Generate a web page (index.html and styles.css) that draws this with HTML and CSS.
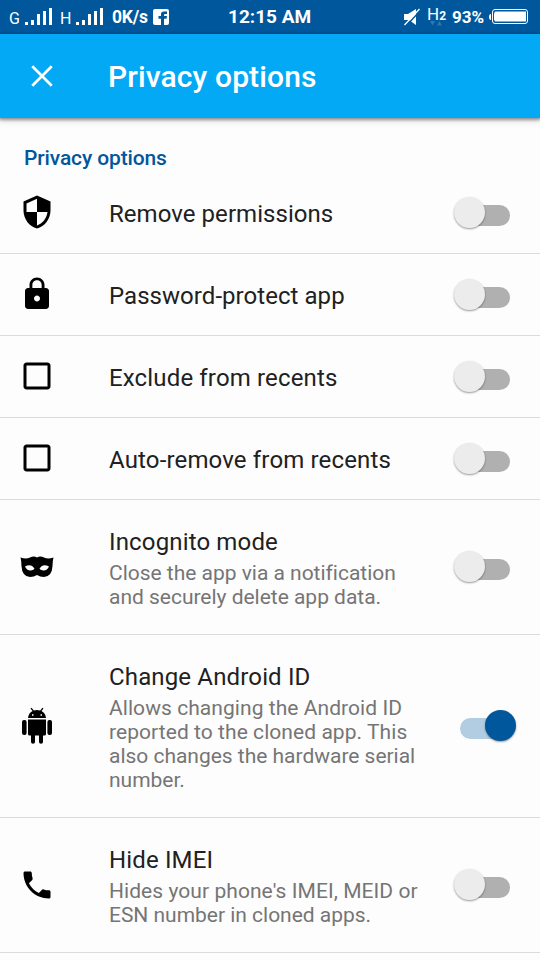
FILE: index.html
```html
<!DOCTYPE html>
<html lang="en">
<head>
<meta charset="utf-8">
<title>Privacy options</title>
<link rel="stylesheet" href="styles.css">
</head>
<body>
<div class="status">
  <div class="status-left">
    <span class="net net-g">G</span>
    <svg class="bars" width="28" height="18" viewBox="0 0 28 18" fill="#fff"><path d="M0 14h3v3H0zM6 12h3v5H6zM12 6h3v11h-3zM18 3h3v14h-3zM24 0h3v17h-3z"/></svg>
    <span class="net net-h">H</span>
    <svg class="bars" width="28" height="18" viewBox="0 0 28 18" fill="#fff"><path d="M0 14h3v3H0zM6 12h3v5H6zM12 6h3v11h-3zM18 3h3v14h-3zM24 0h3v17h-3z"/></svg>
    <span class="speed">0K/s</span>
    <svg class="fb" width="16" height="16" viewBox="0 0 16 16"><rect width="16" height="16" rx="2" fill="#fff"/><path d="M8 16V9.700H5.500V7H8V5.200Q8 2.500 11 2.500H14V5H12Q11 5 11 6V7H14L13.500 9.700H11V16z" fill="#01579b"/></svg>
  </div>
  <div class="clock">12:15 AM</div>
  <div class="status-right">
    <svg class="mute" width="17" height="17" viewBox="0 0 17 17"><path d="M0 5h4l8-5v16l-7-5H0z" fill="#fff"/><path d="M1.500 17.500 16 2" stroke="#01579b" stroke-width="1.500"/><path d="M.5 16 15.500 0" stroke="#fff" stroke-width="1.300"/></svg>
    <span class="mobile">H<span class="two">2</span><svg class="updown" width="12" height="5" viewBox="0 0 12 5" fill="#2f78b0"><path d="M0 0h5L2.500 4.500zM7 4.500h5L9.500 0z"/></svg></span>
    <span class="pct">93%</span>
    <svg class="battery" width="39" height="16" viewBox="0 0 39 16"><path d="M2 5Q0 5 0 8T2 11z" fill="#fff"/><rect x="3.500" y=".5" width="35" height="14" rx="2.500" fill="none" stroke="#fff"/><path d="M6 2.500h31v10H6l-1-2v-6z" fill="#fff"/></svg>
  </div>
</div>
<header class="appbar">
  <svg class="close" width="36" height="36" viewBox="0 0 24 24"><path d="M5.500 5.500l13 13M18.500 5.500l-13 13" stroke="#fff" stroke-width="1.800"/></svg>
  <h1>Privacy options</h1>
</header>
<main>
  <h2>Privacy options</h2>
  <div class="row">
    <svg class="icon" viewBox="0 0 24 24"><path d="M12 1 3 5v6c0 5.550 3.840 10.740 9 12 5.160-1.260 9-6.450 9-12V5l-9-4zm0 10.990h7c-.53 4.120-3.280 7.790-7 8.940V12H5V6.300l7-3.110v8.800z"/></svg>
    <div class="text"><div class="title">Remove permissions</div></div>
    <div class="switch"></div>
  </div>
  <div class="row">
    <svg class="icon" viewBox="0 0 24 24"><path d="M18 8h-1V6c0-2.760-2.240-5-5-5S7 3.240 7 6v2H6c-1.100 0-2 .9-2 2v10c0 1.100.9 2 2 2h12c1.100 0 2-.9 2-2V10c0-1.100-.9-2-2-2zm-6 9c-1.100 0-2-.9-2-2s.9-2 2-2 2 .9 2 2-.9 2-2 2zm3.100-9H8.900V6c0-1.710 1.390-3.100 3.100-3.100 1.710 0 3.100 1.390 3.100 3.100v2z"/></svg>
    <div class="text"><div class="title">Password-protect app</div></div>
    <div class="switch"></div>
  </div>
  <div class="row">
    <svg class="icon" viewBox="0 0 24 24"><path d="M19 5v14H5V5h14m0-2H5c-1.100 0-2 .9-2 2v14c0 1.100.9 2 2 2h14c1.100 0 2-.9 2-2V5c0-1.100-.9-2-2-2z"/></svg>
    <div class="text"><div class="title wide">Exclude from recents</div></div>
    <div class="switch"></div>
  </div>
  <div class="row">
    <svg class="icon" viewBox="0 0 24 24"><path d="M19 5v14H5V5h14m0-2H5c-1.100 0-2 .9-2 2v14c0 1.100.9 2 2 2h14c1.100 0 2-.9 2-2V5c0-1.100-.9-2-2-2z"/></svg>
    <div class="text"><div class="title wide">Auto-remove from recents</div></div>
    <div class="switch"></div>
  </div>
  <div class="row">
    <svg class="icon" viewBox="0 0 36 36"><path fill-rule="evenodd" d="M1.500 8.500Q7 10.500 11 8.500Q15 6.500 18 8.500Q21 6.500 25 8.500Q29 10.500 34.500 8.500Q33.500 12 33.500 17Q33 27.500 25 28Q21 28 18 26Q15 28 11 28Q3 27.500 2.500 17Q2.500 12 1.500 8.500zM6 17.500Q8 22 12 21.500Q15 21 15.500 19.500Q12 14 6 17.500zM30 17.500Q28 22 24 21.500Q21 21 20.500 19.500Q24 14 30 17.500z"/></svg>
    <div class="text"><div class="title wide">Incognito mode</div><div class="sub">Close the app via a notification<br>and securely delete app data.</div></div>
    <div class="switch"></div>
  </div>
  <div class="row">
    <svg class="icon" viewBox="0 0 36 36"><path fill-rule="evenodd" d="M9 10Q9.500 5 13.500 3L11.500.5l1-.7 2.300 2.700Q18 1.500 21.200 2.500L23.500-.2l1 .7L22.500 3Q26.500 5 27 10zM13 6.200v1.500h1.500V6.200zM21.500 6.200v1.500H23V6.200z"/><path d="M9 11.500h18V26q0 1.500-1.500 1.500H24V34q0 1.800-2 1.800T20 34v-6.500h-4V34q0 1.800-2 1.800T12 34v-6.500h-1.500Q9 27.500 9 26z"/><rect x="3" y="12" width="4.600" height="15" rx="2"/><rect x="28.400" y="12" width="4.600" height="15" rx="2"/></svg>
    <div class="text"><div class="title wide">Change Android ID</div><div class="sub"><span class="loose">Allows changing the Android ID</span><br><span class="loose">reported to the cloned app. This</span><br>also changes the hardware serial<br>number.</div></div>
    <div class="switch on"></div>
  </div>
  <div class="row">
    <svg class="icon" viewBox="0 0 24 24"><path d="M6.620 10.790c1.440 2.830 3.760 5.140 6.590 6.590l2.200-2.200c.27-.27.67-.36 1.020-.24 1.120.37 2.330.57 3.570.57.55 0 1 .45 1 1V20c0 .55-.45 1-1 1C10.610 21 3 13.390 3 4c0-.55.45-1 1-1h3.500c.55 0 1 .45 1 1 0 1.250.2 2.450.57 3.570.11.35.03.74-.25 1.020l-2.200 2.200z"/></svg>
    <div class="text"><div class="title wide">Hide IMEI</div><div class="sub"><span class="loose">Hides your phone's IMEI, MEID or</span><br>ESN number in cloned apps.</div></div>
    <div class="switch"></div>
  </div>
</main>
</body>
</html>
```
FILE: styles.css
```css
* { box-sizing: border-box; }
body {
  margin: 0;
  height: 960px;
  overflow: hidden;
  background: #fdfdfd;
  font-family: Roboto, "Liberation Sans", sans-serif;
}
svg { display: block; flex: none; overflow: visible; }
.status {
  display: grid;
  grid-template-columns: 228px 1fr auto;
  grid-template-rows: 34px;
  height: 34px;
  padding-right: 12px;
  background: #01579b;
  color: #fff;
  line-height: 34px;
}
.status-left, .status-right { display: flex; align-items: center; line-height: 20px; }
.net { font-size: 16px; padding-top: 4px; }
.net-g { width: 16px; margin-left: 9px; }
.net-h { width: 16px; margin-left: 7px; }
.bars { margin-top: 0; }
.speed { width: 41px; margin-left: 8px; font-size: 17.500px; font-weight: 700; letter-spacing: -.2px; }
.clock { font-size: 19px; font-weight: 700; }
.mute { margin-right: 6px; }
.mobile { position: relative; width: 25px; height: 34px; font-size: 17px; line-height: 28px; }
.two { font-size: 12px; font-weight: 700; }
.updown { position: absolute; left: 3px; top: 21px; }
.pct { width: 37px; font-size: 17px; font-weight: 700; }
.appbar {
  position: relative;
  display: flex;
  align-items: center;
  height: 84px;
  padding-left: 24px;
  background: #03a9f4;
  color: #fff;
  box-shadow: 0 1px 3px 1px rgba(0, 0, 0, .4), 0 4px 7px rgba(0, 0, 0, .08);
}
h1 { margin: 2px 0 0 48px; font-size: 30px; font-weight: 500; line-height: 36px; letter-spacing: .12px; }
h2 {
  height: 54px;
  margin: 0;
  padding: 28px 0 0 24px;
  color: #01579b;
  font-size: 21px;
  font-weight: 500;
  line-height: 25px;
  letter-spacing: -.13px;
}
.row {
  display: flex;
  align-items: center;
  padding: 0 24px 0 19px;
  border-bottom: 1px solid #dcdcdc;
}
.icon { width: 36px; height: 36px; margin-bottom: 1px; }
.text { flex: 1; padding: 28px 0 25px 54px; }
.title { color: #212121; font-size: 24px; line-height: 28px; letter-spacing: .05px; }
.title.wide { letter-spacing: .15px; }
.sub { margin-top: 5px; color: #757575; font-size: 21px; line-height: 24px; letter-spacing: -.02px; white-space: nowrap; }
.loose { letter-spacing: .06px; }
.switch { position: relative; flex: none; width: 62px; height: 31px; margin-bottom: 1px; }
.switch::before {
  content: "";
  position: absolute;
  left: 6px;
  top: 8px;
  width: 50px;
  height: 21px;
  border-radius: 11px;
  background: #b0b0b0;
}
.switch::after {
  content: "";
  position: absolute;
  left: 0;
  top: 0;
  width: 31px;
  height: 31px;
  border-radius: 50%;
  background: #ececec;
  box-shadow: 0 1px 2px rgba(0, 0, 0, .4);
}
.switch.on::before { background: #b2cde1; }
.switch.on::after { left: 31px; background: #01579b; }
```
